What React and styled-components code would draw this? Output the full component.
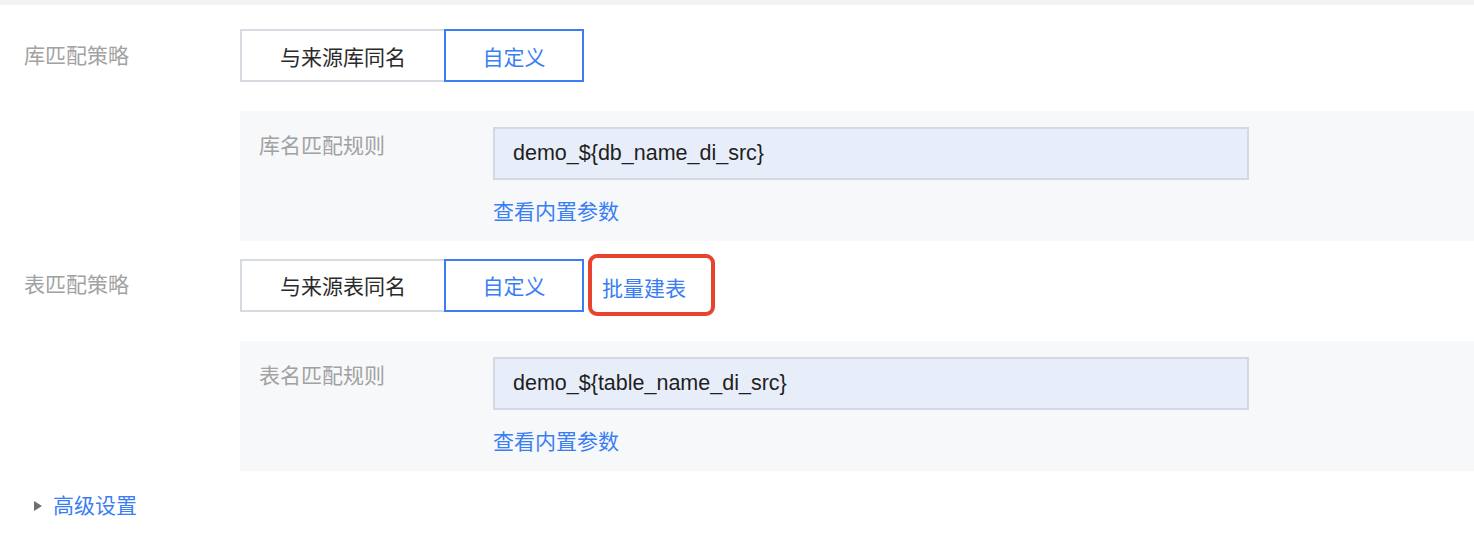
import React from "react";
import styled, { createGlobalStyle } from "styled-components";

const GlobalStyle = createGlobalStyle`
  html, body {
    margin: 0;
    padding: 0;
    background: #ffffff;
  }
  body {
    font-family: "Liberation Sans", "Noto Sans CJK SC", sans-serif;
    color: #222222;
  }
`;

const BLUE = "#3a7ef4";

const TopBar = styled.div`
  height: 5px;
  background: #f3f3f3;
`;

const Form = styled.div`
  padding-top: 24px;
`;

const FieldRow = styled.div`
  display: grid;
  grid-template-columns: 240px 1fr;
  align-items: center;
  margin-top: ${(p) => p.$top || 0}px;
`;

const FieldLabel = styled.div`
  padding-left: 24px;
  font-size: 21px;
  line-height: 30px;
  color: #a2a2a2;
`;

const Controls = styled.div`
  display: flex;
  align-items: center;
`;

const Segmented = styled.div`
  display: flex;
  height: 53px;
`;

const SegButton = styled.div`
  box-sizing: border-box;
  width: ${(p) => p.$width}px;
  display: flex;
  align-items: center;
  justify-content: center;
  font-size: 21px;
  color: ${(p) => (p.$active ? BLUE : "#2b2b2b")};
  border: 2px solid ${(p) => (p.$active ? BLUE : "#d6dae1")};
  border-right-width: ${(p) => (p.$active ? 2 : 0)}px;
  background: #ffffff;
  cursor: pointer;
`;

// red annotation around the link
const Highlight = styled.div`
  box-sizing: border-box;
  margin: -4px 0 -4px 4px;
  width: 127px;
  height: 62px;
  border: 4px solid #e8432e;
  border-radius: 9px;
  display: flex;
  align-items: center;
  padding: 8px 0 0 10px;
`;

const LinkText = styled.a`
  font-size: 21px;
  line-height: 30px;
  color: ${BLUE};
  text-decoration: none;
  cursor: pointer;
`;

const SubPanel = styled.div`
  margin: 29px 0 0 240px;
  background: #f7f8fa;
  padding: 16px 0 14px 19px;
  display: grid;
  grid-template-columns: 234px 756px;
  row-gap: 17px;
`;

const SubLabel = styled.div`
  font-size: 21px;
  line-height: 30px;
  padding-top: 4px;
  color: #a2a2a2;
`;

const InputBox = styled.div`
  box-sizing: border-box;
  height: 53px;
  display: flex;
  align-items: center;
  padding-left: 18px;
  background: #e8eef9;
  border: 2px solid #d3d9e2;
  font-size: 21.5px;
  color: #1f1f1f;
`;

const Advanced = styled.div`
  display: flex;
  align-items: center;
  gap: 11px;
  margin-top: 20px;
  padding-left: 34px;
`;

const Caret = styled.span`
  width: 0;
  height: 0;
  border-top: 5px solid transparent;
  border-bottom: 5px solid transparent;
  border-left: 8px solid #6e6e6e;
`;

const MatchBlock = ({ label, strategy, custom, value, subLabel, extra, top }) => (
  <>
    <FieldRow $top={top}>
      <FieldLabel>{label}</FieldLabel>
      <Controls>
        <Segmented>
          <SegButton $width={204}>{strategy}</SegButton>
          <SegButton $width={140} $active>
            {custom}
          </SegButton>
        </Segmented>
        {extra}
      </Controls>
    </FieldRow>
    <SubPanel>
      <SubLabel>{subLabel}</SubLabel>
      <InputBox>{value}</InputBox>
      <span />
      <LinkText>查看内置参数</LinkText>
    </SubPanel>
  </>
);

const App = () => {
  return (
    <>
      <GlobalStyle />
      <TopBar />
      <Form>
        <MatchBlock
          label="库匹配策略"
          strategy="与来源库同名"
          custom="自定义"
          subLabel="库名匹配规则"
          value="demo_${db_name_di_src}"
        />
        <MatchBlock
          top={17}
          label="表匹配策略"
          strategy="与来源表同名"
          custom="自定义"
          subLabel="表名匹配规则"
          value="demo_${table_name_di_src}"
          extra={
            <Highlight>
              <LinkText>批量建表</LinkText>
            </Highlight>
          }
        />
        <Advanced>
          <Caret />
          <LinkText>高级设置</LinkText>
        </Advanced>
      </Form>
    </>
  );
};

export default App;
